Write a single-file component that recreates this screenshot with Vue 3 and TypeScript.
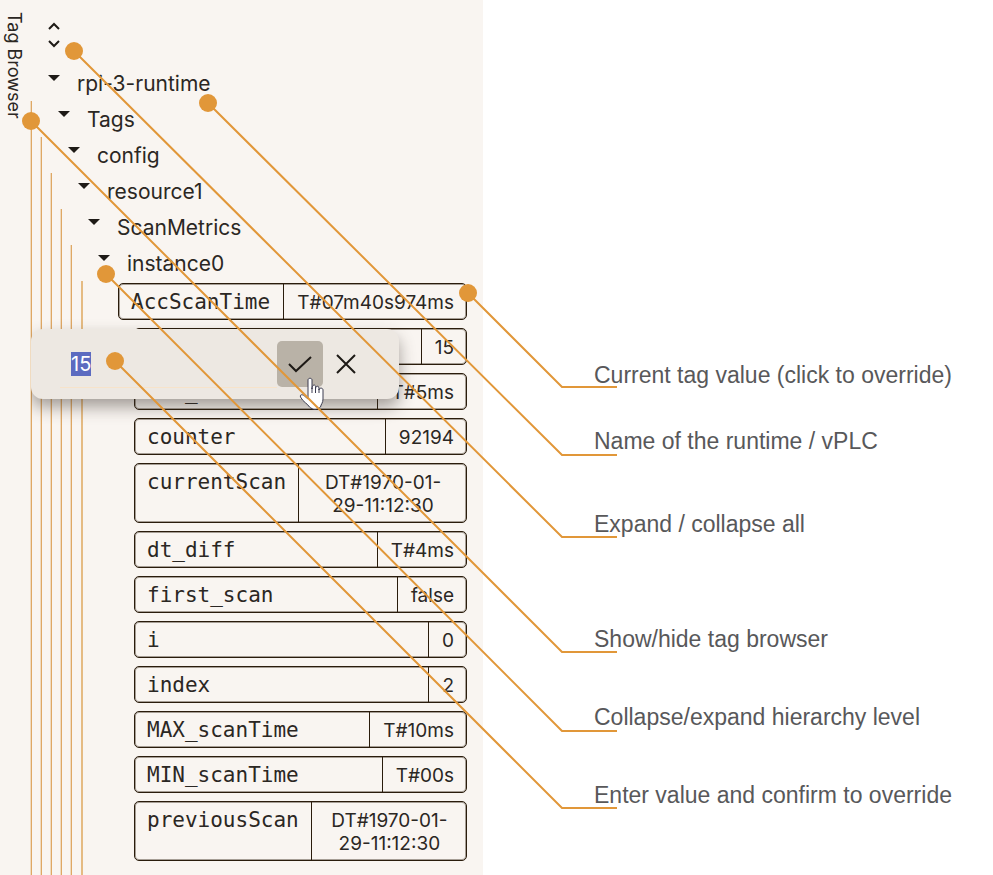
<script setup lang="ts">
import { nextTick, onMounted, ref } from 'vue'

interface Tag {
  name: string
  value: string
  root?: boolean
}
interface Row {
  name: string
  depth: number
}
interface Callout {
  text: string
  dot: [number, number]
  elbow: [number, number]
}

const open = ref(true)
const draft = ref('15')
const field = ref<HTMLInputElement | null>(null)

const rows: Row[] = ['rpi-3-runtime', 'Tags', 'config', 'resource1', 'ScanMetrics', 'instance0'].map(
  (name, depth) => ({ name, depth }),
)

const tags: Tag[] = [
  { name: 'AccScanTime', value: 'T#07m40s974ms', root: true },
  { name: '', value: '15' },
  { name: 'avr_dt', value: 'T#5ms' },
  { name: 'counter', value: '92194' },
  { name: 'currentScan', value: 'DT#1970-01-29-11:12:30' },
  { name: 'dt_diff', value: 'T#4ms' },
  { name: 'first_scan', value: 'false' },
  { name: 'i', value: '0' },
  { name: 'index', value: '2' },
  { name: 'MAX_scanTime', value: 'T#10ms' },
  { name: 'MIN_scanTime', value: 'T#00s' },
  { name: 'previousScan', value: 'DT#1970-01-29-11:12:30' },
]

const callouts: Callout[] = [
  { text: 'Current tag value (click to override)', dot: [468, 293], elbow: [562, 387] },
  { text: 'Name of the runtime / vPLC', dot: [208, 103], elbow: [562, 455] },
  { text: 'Expand / collapse all', dot: [74, 51], elbow: [562, 537] },
  { text: 'Show/hide tag browser', dot: [31, 121], elbow: [562, 652] },
  { text: 'Collapse/expand hierarchy level', dot: [106, 274], elbow: [562, 731] },
  { text: 'Enter value and confirm to override', dot: [115, 361], elbow: [562, 808] },
]

function linePoints(c: Callout): string {
  return `${c.dot.join(',')} ${c.elbow.join(',')} 617,${c.elbow[1]}`
}

onMounted(async () => {
  await nextTick()
  field.value?.focus()
  field.value?.select()
})
</script>

<template>
  <main class="page">
    <section class="browser" aria-label="Tag Browser">
      <button class="tab" type="button">Tag Browser</button>

      <div class="tree">
        <button class="unfold" type="button" aria-label="Expand or collapse all">
          <svg width="14" height="26" viewBox="0 0 14 26">
            <path d="M2 7 L7 2 L12 7 M2 19 L7 24 L12 19" />
          </svg>
        </button>

        <div class="levels">
          <div v-for="row in rows" :key="row.name" class="level" :style="{ '--depth': row.depth }">
            <button class="toggle" type="button" :aria-label="'Toggle ' + row.name">
              <svg width="12" height="6" viewBox="0 0 12 6"><path d="M0 0H12L6 6Z" /></svg>
            </button>
            <span>{{ row.name }}</span>
          </div>
          <i
            v-for="row in rows"
            :key="'guide-' + row.name"
            class="guide"
            :class="{ deep: row.depth === 5 }"
            :style="{ '--depth': row.depth }"
          ></i>

          <ul class="tags">
            <li v-for="(tag, n) in tags" :key="n" class="tag" :class="{ root: tag.root }">
              <span class="name">{{ tag.name }}</span>
              <button class="value" type="button">{{ tag.value }}</button>
            </li>
          </ul>
        </div>
      </div>

      <form v-if="open" class="editor" @submit.prevent="open = false">
        <input ref="field" v-model="draft" class="field" type="text" aria-label="Override value" />
        <button class="action confirm" type="submit" aria-label="Confirm">
          <svg width="24" height="20" viewBox="0 0 24 20"><path d="M1 10 L8 17 L23 3" /></svg>
          <svg class="hand" width="26" height="34" viewBox="0 0 26 34">
            <path
              d="M9 3C9 .7 13 .7 13 3V12C13 7 16.500 7.500 16.500 9.500V12C16.500 8.500 20 8.500 20 11V13C20 10.500 24 10.500 24 13V22C24 26 22 27 21.500 30C18 33 14 33 10.500 30C9 27 4 25 1.500 20C.5 17.500 3.500 17 5.500 19L9 22Z"
            />
            <path d="M13 11V16M16.500 11V16M20 12V16" />
          </svg>
        </button>
        <button class="action" type="button" aria-label="Cancel" @click="open = false">
          <svg width="22" height="22" viewBox="0 0 22 22"><path d="M2 2 L20 20 M20 2 L2 20" /></svg>
        </button>
      </form>
    </section>

    <section class="notes" aria-label="Legend">
      <p v-for="c in callouts" :key="c.text">{{ c.text }}</p>
    </section>

    <svg class="wires" width="993" height="875" viewBox="0 0 993 875" aria-hidden="true">
      <g v-for="c in callouts" :key="c.text">
        <polyline :points="linePoints(c)" />
        <circle :cx="c.dot[0]" :cy="c.dot[1]" r="9" />
      </g>
    </svg>
  </main>
</template>

<style>
body {
  margin: 0;
  background: #fff;
}
</style>

<style scoped>
.page {
  position: relative;
  display: grid;
  grid-template-columns: minmax(0, 483px) minmax(0, 1fr);
  min-height: 100vh;
  overflow: hidden;
}
button {
  margin: 0;
  padding: 0;
  border: 0;
  background: none;
  color: inherit;
  font: inherit;
  cursor: pointer;
}
.browser {
  position: relative;
  display: flex;
  align-items: stretch;
  background: #f9f5f1;
  color: #2b2723;
  font-family: Inter, sans-serif;
  font-size: 20px;
  line-height: 23px;
}
.tab {
  align-self: flex-start;
  flex: 0 0 auto;
  width: 25px;
  margin-top: 12px;
  padding-left: 3px;
  writing-mode: vertical-rl;
  font-size: 18px;
  line-height: 22px;
  white-space: nowrap;
}
.tree {
  flex: 1;
  min-width: 0;
  display: flex;
  flex-direction: column;
}
.unfold {
  width: 14px;
  height: 26px;
  margin: 22px 0 17px 22px;
}
svg {
  display: block;
}
.unfold path {
  fill: none;
  stroke: #1e1a16;
  stroke-width: 2;
}
.levels {
  position: relative;
  flex: 1;
}
.level {
  display: flex;
  align-items: center;
  gap: 17px;
  height: 36px;
  padding-left: calc(23px + var(--depth) * 10px);
  font-size: 21px;
}
.toggle {
  padding-bottom: 10px;
}
.toggle path {
  fill: #1e1a16;
}
.guide {
  position: absolute;
  top: calc(36px + var(--depth) * 36px);
  bottom: 0;
  left: calc(6px + var(--depth) * 10px);
  width: 1px;
  background: #dfa865;
  box-shadow: -1px 0 #f0dbc0;
}
.guide.deep {
  width: 2px;
  background: #e5bb83;
  box-shadow: none;
}
.tags {
  display: flex;
  flex-direction: column;
  gap: 8px;
  margin: 0;
  padding: 2px 16px 14px 109px;
  list-style: none;
}
.tag {
  display: flex;
  border: 1px solid #2a1c0c;
  border-radius: 5px;
  box-shadow: inset 0 0 0 1px rgba(42, 28, 12, 0.4);
}
.tag.root {
  margin-left: -16px;
}
.name {
  flex: 1 0 auto;
  padding: 7px 12px 5px;
  font-family: 'DejaVu Sans Mono', monospace;
  font-size: 21px;
}
.value {
  flex: 0 1 auto;
  min-width: 0;
  padding: 7px 12px 5px 13px;
  border-left: 1px solid #2a1c0c;
  font-size: 19px;
  line-height: 23px;
  text-align: center;
}
.editor {
  position: absolute;
  top: 329px;
  left: 31px;
  display: flex;
  align-items: center;
  box-sizing: border-box;
  width: 368px;
  height: 70px;
  padding: 0 30px 0 29px;
  border-radius: 12px;
  background: #ede8e2;
  box-shadow: 0 8px 16px rgba(60, 50, 45, 0.45);
  clip-path: inset(-10px -30px -40px 0);
}
.field {
  flex: 1;
  min-width: 0;
  height: 46px;
  margin: 0;
  padding: 0 11px;
  border: 0;
  border-bottom: 1px solid #f7e3ca;
  outline: 0;
  background: none;
  color: inherit;
  font: inherit;
}
.field::selection {
  background: #5c6bc0;
  color: #fff;
}
.action {
  position: relative;
  display: grid;
  place-items: center;
  width: 46px;
  height: 46px;
  border-radius: 5px;
}
.action path {
  fill: none;
  stroke: #1e1a16;
  stroke-width: 2;
}
.confirm {
  background: #b9b2a7;
}
.hand {
  position: absolute;
  top: 36px;
  left: 22px;
}
.action .hand path {
  stroke: #3c3c50;
  stroke-width: 1;
}
.action .hand path:first-child {
  fill: #fff;
}
.notes {
  padding: 361px 0 0 111px;
  color: #58585a;
  font-family: 'Liberation Sans', Arial, sans-serif;
  font-size: 23px;
  line-height: 28px;
  white-space: nowrap;
}
.notes p {
  margin: 0 0 50px;
}
.notes p:nth-child(1) {
  margin-bottom: 38px;
}
.notes p:nth-child(2) {
  margin-bottom: 55px;
}
.notes p:nth-child(3) {
  margin-bottom: 87px;
}
.wires {
  position: absolute;
  top: 0;
  left: 0;
  pointer-events: none;
}
.wires polyline {
  fill: none;
  stroke: #e19739;
  stroke-width: 2;
}
.wires circle {
  fill: #e19739;
}
</style>
